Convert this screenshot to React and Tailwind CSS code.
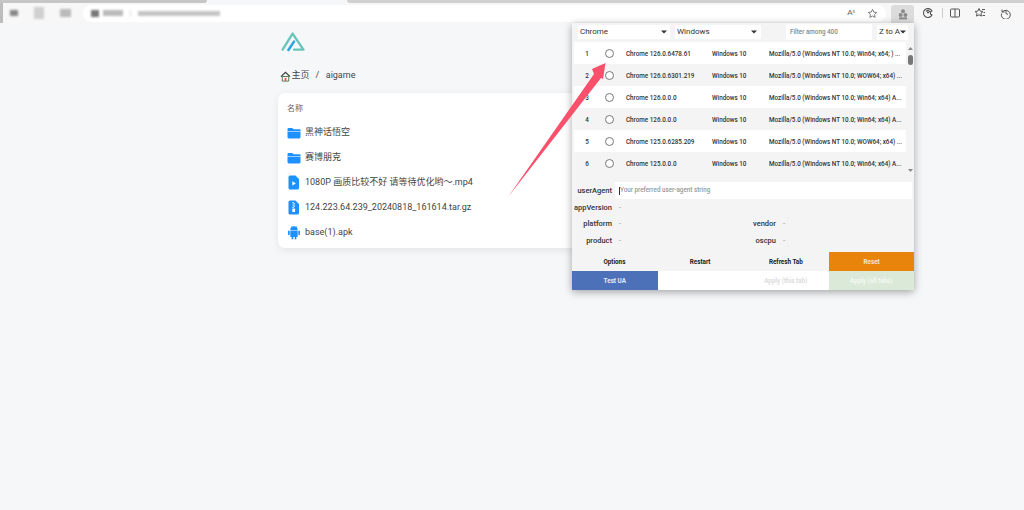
import React from "react";

const rows = [
  ["1", "Chrome 126.0.6478.61", "Mozilla/5.0 (Windows NT 10.0; Win64; x64; ) ..."],
  ["2", "Chrome 126.0.6301.219", "Mozilla/5.0 (Windows NT 10.0; WOW64; x64) ..."],
  ["3", "Chrome 126.0.0.0", "Mozilla/5.0 (Windows NT 10.0; Win64; x64) A..."],
  ["4", "Chrome 126.0.0.0", "Mozilla/5.0 (Windows NT 10.0; Win64; x64) A..."],
  ["5", "Chrome 125.0.6285.209", "Mozilla/5.0 (Windows NT 10.0; WOW64; x64) ..."],
  ["6", "Chrome 125.0.0.0", "Mozilla/5.0 (Windows NT 10.0; Win64; x64) A..."],
];

const Folder = () => (
  <svg width="14" height="14" viewBox="0 0 14 14" className="shrink-0">
    <path d="M0.5 3.2a1.2 1.2 0 0 1 1.2-1.2h3.6l1.3 1.3h5.9a1.2 1.2 0 0 1 1.2 1.2v0.7H0.5z" fill="#1e90ff" />
    <path d="M0.5 5.7h13v5.4a1.3 1.3 0 0 1-1.3 1.3H1.8a1.3 1.3 0 0 1-1.3-1.3z" fill="#1e90ff" />
  </svg>
);
const VideoFile = () => (
  <svg width="14" height="15" viewBox="0 0 14 15" className="shrink-0">
    <path d="M3 0.5h5.5l3.5 3.5v9a1.5 1.5 0 0 1-1.5 1.5H3A1.5 1.5 0 0 1 1.5 13V2A1.5 1.5 0 0 1 3 0.5z" fill="#1e90ff" />
    <path d="M5.3 6.2l3.6 2.2-3.6 2.2z" fill="#fff" />
  </svg>
);
const ZipFile = () => (
  <svg width="14" height="15" viewBox="0 0 14 15" className="shrink-0">
    <path d="M3 0.5h5.5l3.5 3.5v9a1.5 1.5 0 0 1-1.5 1.5H3A1.5 1.5 0 0 1 1.5 13V2A1.5 1.5 0 0 1 3 0.5z" fill="#1e90ff" />
    <path d="M5.5 2h1.2v1.2H5.5zM6.7 3.2h1.2v1.2H6.7zM5.5 4.4h1.2v1.2H5.5zM6.7 5.6h1.2v1.2H6.7zM5.5 6.8h1.2V8H5.5z" fill="#fff" />
    <rect x="5.3" y="8.6" width="2.8" height="3.4" rx="0.6" fill="#fff" />
  </svg>
);
const Android = () => (
  <svg width="14" height="15" viewBox="0 0 14 15" className="shrink-0">
    <path d="M3.3 5a3.7 3.7 0 0 1 7.4 0z" fill="#1e90ff" />
    <path d="M4.4 1.2l1 1.6M9.6 1.2l-1 1.6" stroke="#1e90ff" strokeWidth="0.6" />
    <path d="M3.3 5.6h7.4v5.6a0.9 0.9 0 0 1-0.9 0.9H4.2a0.9 0.9 0 0 1-0.9-0.9z" fill="#1e90ff" />
    <rect x="1" y="5.6" width="1.7" height="4.6" rx="0.85" fill="#1e90ff" />
    <rect x="11.3" y="5.6" width="1.7" height="4.6" rx="0.85" fill="#1e90ff" />
    <rect x="4.6" y="11" width="1.7" height="3.4" rx="0.85" fill="#1e90ff" />
    <rect x="7.7" y="11" width="1.7" height="3.4" rx="0.85" fill="#1e90ff" />
  </svg>
);

const files = [
  [<Folder />, "黑神话悟空"],
  [<Folder />, "赛博朋克"],
  [<VideoFile />, "1080P 画质比较不好 请等待优化哟～.mp4"],
  [<ZipFile />, "124.223.64.239_20240818_161614.tar.gz"],
  [<Android />, "base(1).apk"],
];

const Caret = () => (
  <svg width="6" height="4" viewBox="0 0 6 4" className="shrink-0"><path d="M0 0.5h6L3 3.5z" fill="#333" /></svg>
);

const Field = ({ label, w }) => (
  <div className="flex items-center h-[17px]">
    <span className={`${w} text-right text-[7.5px] font-medium text-[#333] whitespace-nowrap`}>{label}</span>
    <span className="ml-[7px] text-[8px] text-[#999]">-</span>
  </div>
);

const Btn = ({ children, cls }) => (
  <div className={`flex-1 flex items-center justify-center pt-[2px] text-[6.3px] font-bold whitespace-nowrap ${cls}`}>{children}</div>
);

export default function App() {
  return (
    <div className="relative w-[1024px] h-[510px] overflow-hidden bg-[#f6f7f9] text-[#333]" style={{ fontFamily: "'Roboto','Noto Sans CJK SC',sans-serif" }}>
      {/* tab strip */}
      <div className="flex h-[3px] bg-[#f6f7f9]">
        <div className="w-[207px] bg-[#c6c6c6] rounded-br-[4px]" />
        <div className="flex-1" />
        <div className="w-[677px] bg-[#d0d0d0] rounded-bl-[4px]" />
      </div>
      {/* toolbar */}
      <div className="flex items-center h-[20px] bg-[#f7f7f8]">
        <div className="w-[3px] h-full bg-[#bdbdbd]" />
        <div className="flex items-center gap-[16px] ml-[7px] blur-[1.2px]">
          <div className="w-[8px] h-[6px] bg-[#888]" />
          <div className="w-[10px] h-[12px] bg-[#d0d0d0]" />
          <div className="w-[11px] h-[8px] bg-[#bbb]" />
        </div>
        <div className="ml-[12px] flex items-center h-[17px] w-[803px] bg-white rounded-full pl-[8px] pr-[8px]">
          <div className="flex items-center gap-[4px] blur-[1px]">
            <div className="w-[8px] h-[7px] bg-[#777]" />
            <div className="w-[20px] h-[6px] bg-[#bbb]" />
            <div className="w-[1px] h-[7px] ml-[3px] bg-[#ddd]" />
            <div className="ml-[3px] w-[82px] h-[5px] bg-[#c5c5c5]" />
          </div>
          <div className="ml-auto flex items-center gap-[12px]">
            <span className="text-[8px] text-[#666] leading-none" style={{ fontFamily: "'Liberation Sans',sans-serif" }}>A<sup className="text-[5px]">s</sup></span>
            <svg width="11" height="11" viewBox="0 0 24 24" fill="none" stroke="#666" strokeWidth="1.8"><path d="M12 3l2.8 5.9 6.4.8-4.7 4.4 1.2 6.4L12 17.4l-5.7 3.1 1.2-6.4L2.8 9.7l6.4-.8z" /></svg>
          </div>
        </div>
        <div className="ml-[5px] flex items-center justify-center w-[23px] h-[18px] self-end bg-[#dcdcdc] rounded-t-[3px]">
          <svg width="10" height="11" viewBox="0 0 10 11" fill="#8a8a8a"><circle cx="5" cy="2.2" r="2" /><circle cx="2.6" cy="6" r="2" /><circle cx="7.4" cy="6" r="2" /><rect x="1" y="8.4" width="8" height="2" /></svg>
        </div>
        <svg className="ml-[8px]" width="12" height="12" viewBox="0 0 24 24" fill="none" stroke="#555" strokeWidth="2.2"><path d="M20 8a9 9 0 1 0 0 8l-3-1.5v-5z" /><path d="M9 8l3-2 3 3-3 3z" /></svg>
        <div className="ml-[8px] w-[1px] h-[10px] bg-[#ccc]" />
        <svg className="ml-[6px]" width="12" height="12" viewBox="0 0 24 24" fill="none" stroke="#555" strokeWidth="2"><rect x="3" y="4" width="18" height="16" rx="2" /><path d="M12 4v16" /></svg>
        <svg className="ml-[13px]" width="12" height="12" viewBox="0 0 24 24" fill="none" stroke="#555" strokeWidth="2"><path d="M10 3l2.4 5.2 5.6.7-4.1 3.8 1 5.5L10 15.6l-4.9 2.6 1-5.5L2 8.9l5.6-.7zM16 5h6M19 11h3M17 17h5" /></svg>
        <svg className="ml-[14px]" width="12" height="12" viewBox="0 0 24 24" fill="none" stroke="#555" strokeWidth="2"><path d="M4 5v5h5" /><path d="M4.6 10A9 9 0 1 1 3 13" /><path d="M12 7v6l4 2" /></svg>
      </div>

      {/* main column */}
      <main className="w-[468px] mx-auto pt-[8px]">
        <div className="ml-[3px] h-[22px] w-[24px]">
          <svg width="24" height="21" viewBox="0 0 24 21" fill="none">
            <path d="M1.6 18.6L11.6 2.6 22.4 18.6H13" stroke="#6cc5bb" strokeWidth="2.4" strokeLinejoin="round" strokeLinecap="round" />
            <path d="M7.4 19L13 10.6" stroke="#2ea5e0" strokeWidth="2.6" strokeLinecap="round" />
          </svg>
        </div>
        <div className="flex items-center h-[18px] mt-[14px] text-[9px] text-[#444]">
          <svg width="11" height="11" viewBox="0 0 12 12" className="ml-[2px] mr-[0.5px]">
            <path d="M1 6.2L6 1.4l5 4.8" fill="none" stroke="#3b3b3b" strokeWidth="1.3" />
            <path d="M2.5 6v5h7V6z" fill="#fff" stroke="#3f6f3f" strokeWidth="1" />
            <rect x="5" y="7.5" width="2" height="3.3" fill="#e2574c" />
          </svg>
          <span>主页</span>
          <span className="ml-[6px] mr-[6.5px]">/</span>
          <span>aigame</span>
        </div>
        <div className="mt-[8px] h-[155px] bg-white rounded-[7px] shadow-[0_2px_8px_rgba(0,0,0,0.08)] pt-[9px] px-[9px]">
          <div className="text-[8px] leading-[14px] text-[#666]">名称</div>
          <div className="mt-[4px] flex flex-col">
            {files.map(([icon, name], i) => (
              <div key={i} className="flex items-center gap-[4px] h-[25px] text-[9px] text-[#444] whitespace-nowrap">
                {icon}
                <span>{name}</span>
              </div>
            ))}
          </div>
        </div>
      </main>

      {/* extension popup */}
      <div className="absolute left-[572px] top-[23px] w-[342px] h-[267px] flex flex-col bg-[#f4f4f4] shadow-[0_2px_8px_rgba(0,0,0,0.35)]" style={{ fontFamily: "'Roboto','Liberation Sans',sans-serif" }}>
        <div className="flex items-center h-[18px] shrink-0 bg-[#f4f4f4] text-[#333] whitespace-nowrap">
          <div className="ml-[6px] w-[92px] h-[14px] flex items-center justify-between bg-white px-[2px] pr-[3px] text-[8px]"><span>Chrome</span><Caret /></div>
          <div className="ml-[5px] w-[86px] h-[14px] flex items-center justify-between bg-white px-[2px] pr-[4px] text-[8px]"><span>Windows</span><Caret /></div>
          <div className="ml-[25px] w-[86px] h-[16px] flex items-center bg-white px-[4px] pt-[1px] text-[6.3px] font-medium text-[#888]">Filter among 400</div>
          <div className="ml-[5px] w-[31px] h-[15px] flex items-center justify-between bg-white px-[2px] text-[8px]"><span>Z to A</span><Caret /></div>
        </div>
        <div className="flex h-[132px] shrink-0 ml-[2px] mt-[1px]">
          <div className="w-[332px] shrink-0 flex flex-col">
            {rows.map((r, i) => (
              <div key={i} className={`flex items-center h-[22px] pt-[3px] text-[6.3px] font-medium text-[#333] whitespace-nowrap ${i % 2 ? "bg-[#f4f4f4]" : "bg-white"}`}>
                <span className="w-[26px] text-center">{r[0]}</span>
                <span className="w-[9px] h-[9px] -mt-[3px] rounded-full border border-[#777] ml-[5px] bg-white shrink-0" />
                <span className="ml-[12px] w-[86px]">{r[1]}</span>
                <span className="w-[57px]">Windows 10</span>
                <span>{r[2]}</span>
              </div>
            ))}
          </div>
          <div className="flex-1 flex flex-col items-center relative">
            <svg width="5" height="3" viewBox="0 0 5 3" className="mt-[5px]"><path d="M0 3h5L2.5 0z" fill="#888" /></svg>
            <div className="w-[5px] h-[10px] mt-[5px] rounded-full bg-[#777]" />
            <svg width="5" height="3" viewBox="0 0 5 3" className="absolute bottom-[2px]"><path d="M0 0h5L2.5 3z" fill="#888" /></svg>
          </div>
        </div>
        <div className="mt-[8px] flex items-center h-[17px] shrink-0">
          <span className="w-[40px] text-right text-[7.5px] font-medium text-[#333]">userAgent</span>
          <div className="ml-[3px] mr-[2px] flex-1 h-[17px] bg-white pl-[4px] flex items-center text-[6.3px] font-medium text-[#999]">
            <span className="w-[1px] h-[8px] bg-[#333]" />Your preferred user-agent string
          </div>
        </div>
        <div className="h-[15px] pt-[1px] flex items-center shrink-0 mt-[1px]">
          <Field label="appVersion" w="w-[40px]" />
        </div>
        <div className="flex shrink-0">
          <div className="w-[171px]">
            <Field label="platform" w="w-[40px]" />
            <Field label="product" w="w-[40px]" />
          </div>
          <div>
            <Field label="vendor" w="w-[33px]" />
            <Field label="oscpu" w="w-[33px]" />
          </div>
        </div>
        <div className="mt-[3px] flex h-[19px] shrink-0 gap-[1px]">
          <Btn cls="text-[#222] bg-[#f4f4f4]">Options</Btn>
          <Btn cls="text-[#222] bg-[#f4f4f4]">Restart</Btn>
          <Btn cls="text-[#222] bg-[#f4f4f4]">Refresh Tab</Btn>
          <Btn cls="text-[#f3e6d0] bg-[#e8830c]">Reset</Btn>
        </div>
        <div className="flex h-[19px] shrink-0">
          <Btn cls="text-[#e6ecf7] bg-[#4c71b8]">Test UA</Btn>
          <Btn cls="bg-white" />
          <Btn cls="text-[#ddd] bg-white">Apply (this tab)</Btn>
          <Btn cls="text-[#f4f8f2] bg-[#dae9d8]">Apply (all tabs)</Btn>
        </div>
      </div>

      {/* annotation arrow */}
      <svg className="absolute left-[500px] top-[55px] pointer-events-none" width="110" height="145" viewBox="0 0 110 145">
        <path d="M8 142L94 19 92 14 105.5 8 103 24 101 23z" fill="#f9506b" />
      </svg>
    </div>
  );
}
